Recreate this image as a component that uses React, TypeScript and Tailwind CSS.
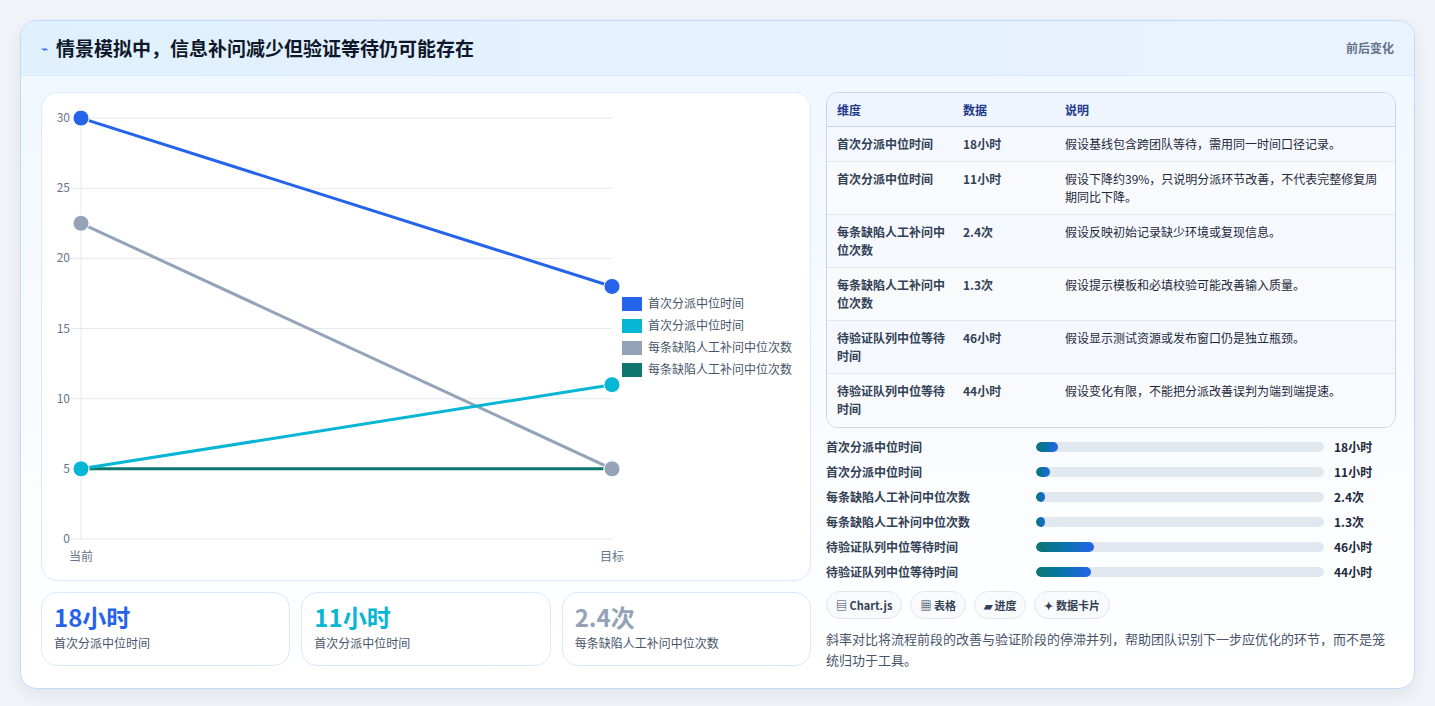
const F = { fontFamily: '"Noto Sans CJK SC", "Noto Sans", sans-serif' };

const ROWS = [
  ["首次分派中位时间", "18小时", "假设基线包含跨团队等待，需用同一时间口径记录。"],
  ["首次分派中位时间", "11小时", "假设下降约39%，只说明分派环节改善，不代表完整修复周期同比下降。"],
  ["每条缺陷人工补问中位次数", "2.4次", "假设反映初始记录缺少环境或复现信息。"],
  ["每条缺陷人工补问中位次数", "1.3次", "假设提示模板和必填校验可能改善输入质量。"],
  ["待验证队列中位等待时间", "46小时", "假设显示测试资源或发布窗口仍是独立瓶颈。"],
  ["待验证队列中位等待时间", "44小时", "假设变化有限，不能把分派改善误判为端到端提速。"],
];

const BARS = [
  ["首次分派中位时间", 7.7, "18小时"],
  ["首次分派中位时间", 4.8, "11小时"],
  ["每条缺陷人工补问中位次数", 3, "2.4次"],
  ["每条缺陷人工补问中位次数", 3, "1.3次"],
  ["待验证队列中位等待时间", 20, "46小时"],
  ["待验证队列中位等待时间", 19, "44小时"],
] as const;

const y = (v: number) => 446 - v * 14.03;
const X0 = 39;
const X1 = 570;

function Chart() {
  const series = [
    { c: "#0f766e", a: 5, b: 5 },
    { c: "#94a3b8", a: 22.5, b: 5 },
    { c: "#2563eb", a: 30, b: 18 },
    { c: "#06b6d4", a: 5, b: 11 },
  ];
  const legend = [
    ["#2563eb", "首次分派中位时间"],
    ["#06b6d4", "首次分派中位时间"],
    ["#94a3b8", "每条缺陷人工补问中位次数"],
    ["#0f766e", "每条缺陷人工补问中位次数"],
  ];
  return (
    <svg width="770" height="487" className="block" style={F}>
      {[0, 5, 10, 15, 20, 25, 30].map((v) => (
        <g key={v}>
          <line x1={29} x2={X1} y1={y(v)} y2={y(v)} stroke="#e2e8f0" strokeWidth="1" />
          <text x={28} y={y(v) + 4} textAnchor="end" fontSize="12" fill="#64748b">{v}</text>
        </g>
      ))}
      <line x1={X0} x2={X0} y1={20} y2={446} stroke="#e2e8f0" />
      <text x={X0} y={468} textAnchor="middle" fontSize="12" fill="#64748b">当前</text>
      <text x={X1} y={468} textAnchor="middle" fontSize="12" fill="#64748b">目标</text>
      {series.map((s, i) => (
        <g key={i}>
          <line x1={X0} y1={y(s.a)} x2={X1} y2={y(s.b)} stroke={s.c} strokeWidth="3" />
          <circle cx={X0} cy={y(s.a)} r="8" fill={s.c} stroke="#fff" strokeWidth="1" />
          <circle cx={X1} cy={y(s.b)} r="8" fill={s.c} stroke="#fff" strokeWidth="1" />
        </g>
      ))}
      {legend.map(([c, t], i) => (
        <g key={i}>
          <rect x={580} y={204 + i * 22} width={20} height={14} fill={c} />
          <text x={606} y={215 + i * 22} fontSize="12" fill="#475569">{t}</text>
        </g>
      ))}
    </svg>
  );
}

export default function App() {
  return (
    <div className="min-h-screen bg-[#f1f5f9] p-5" style={F}>
      <div className="rounded-2xl border border-[#bfdbfe] bg-gradient-to-b from-[#f0f7ff] to-white overflow-hidden shadow-[0_6px_20px_rgba(15,23,42,0.08)]">
        <div className="h-[55px] flex items-center justify-between px-5 bg-gradient-to-r from-[#e0f0fd] to-[#eaf2ff] border-b border-[#dbeafe]">
          <div className="flex items-center gap-2">
            <span className="text-[#2563eb] text-xs">⌁</span>
            <h1 className="text-[19px] font-bold text-[#0f172a]">情景模拟中，信息补问减少但验证等待仍可能存在</h1>
          </div>
          <span className="text-xs font-semibold text-[#64748b]">前后变化</span>
        </div>
        <div className="flex gap-[15px] px-5 pt-4 pb-[18px]">
          <div className="w-[770px] flex flex-col gap-[11px]">
            <div className="h-[489px] rounded-2xl border border-[#dbeafe] bg-white overflow-hidden">
              <Chart />
            </div>
            <div className="grid grid-cols-3 gap-[11px]">
              {[
                ["18小时", "首次分派中位时间", "text-[#2563eb]"],
                ["11小时", "首次分派中位时间", "text-[#06b6d4]"],
                ["2.4次", "每条缺陷人工补问中位次数", "text-[#94a3b8]"],
              ].map(([v, l, c], i) => (
                <div key={i} className="h-[74px] rounded-2xl border border-[#dbeafe] bg-white px-3 pt-2">
                  <div className={`text-[24px] font-bold leading-8 ${c}`}>{v}</div>
                  <div className="text-xs text-[#475569] mt-0.5">{l}</div>
                </div>
              ))}
            </div>
          </div>
          <div className="flex-1 flex flex-col">
            <div className="w-[570px] rounded-xl border border-[#cbd5e1] overflow-hidden text-xs">
              <div className="flex h-[34px] items-center bg-[#eef5ff] text-[#1e3a8a] font-semibold border-b border-[#cbd5e1]">
                <div className="w-[136px] pl-[10px]">维度</div>
                <div className="w-[102px]">数据</div>
                <div className="flex-1">说明</div>
              </div>
              {ROWS.map((r, i) => (
                <div key={i} className={`flex pt-[8px] leading-[18px] ${i < 5 ? "border-b border-[#e2e8f0]" : ""} ${i % 2 ? "bg-[#f8fafc]" : "bg-[#f5f9ff]"} ${i === 0 ? "h-[35px]" : "h-[53px]"}`}>
                  <div className="w-[136px] pl-[10px] pr-2 font-semibold text-[#334155]">{r[0]}</div>
                  <div className="w-[102px] font-semibold text-[#334155]">{r[1]}</div>
                  <div className="flex-1 pr-4 text-[#1e293b]">{r[2]}</div>
                </div>
              ))}
            </div>
            <div className="flex flex-col gap-[7px] mt-[10px] w-[570px]">
              {BARS.map(([l, w, v], i) => (
                <div key={i} className="flex items-center h-[18px] text-xs">
                  <div className="w-[210px] font-semibold text-[#334155]">{l}</div>
                  <div className="w-[288px] h-[10px] rounded-full bg-[#e2e8f0] overflow-hidden">
                    <div className="h-full rounded-full bg-gradient-to-r from-[#0f766e] to-[#2563eb]" style={{ width: `${w}%` }} />
                  </div>
                  <div className="ml-[10px] font-bold text-[#1e293b]">{v}</div>
                </div>
              ))}
            </div>
            <div className="flex gap-2 mt-[10px]">
              {["▤ Chart.js", "▦ 表格", "▰ 进度", "✦ 数据卡片"].map((t) => (
                <span key={t} className="h-[28px] px-[9px] flex items-center rounded-full border border-[#e2e8f0] bg-[#f8fafc] text-[11px] font-semibold text-[#334155]">{t}</span>
              ))}
            </div>
            <p className="mt-[9px] text-[13px] leading-[21px] text-[#475569] w-[565px]">
              斜率对比将流程前段的改善与验证阶段的停滞并列，帮助团队识别下一步应优化的环节，而不是笼统归功于工具。
            </p>
          </div>
        </div>
      </div>
    </div>
  );
}
